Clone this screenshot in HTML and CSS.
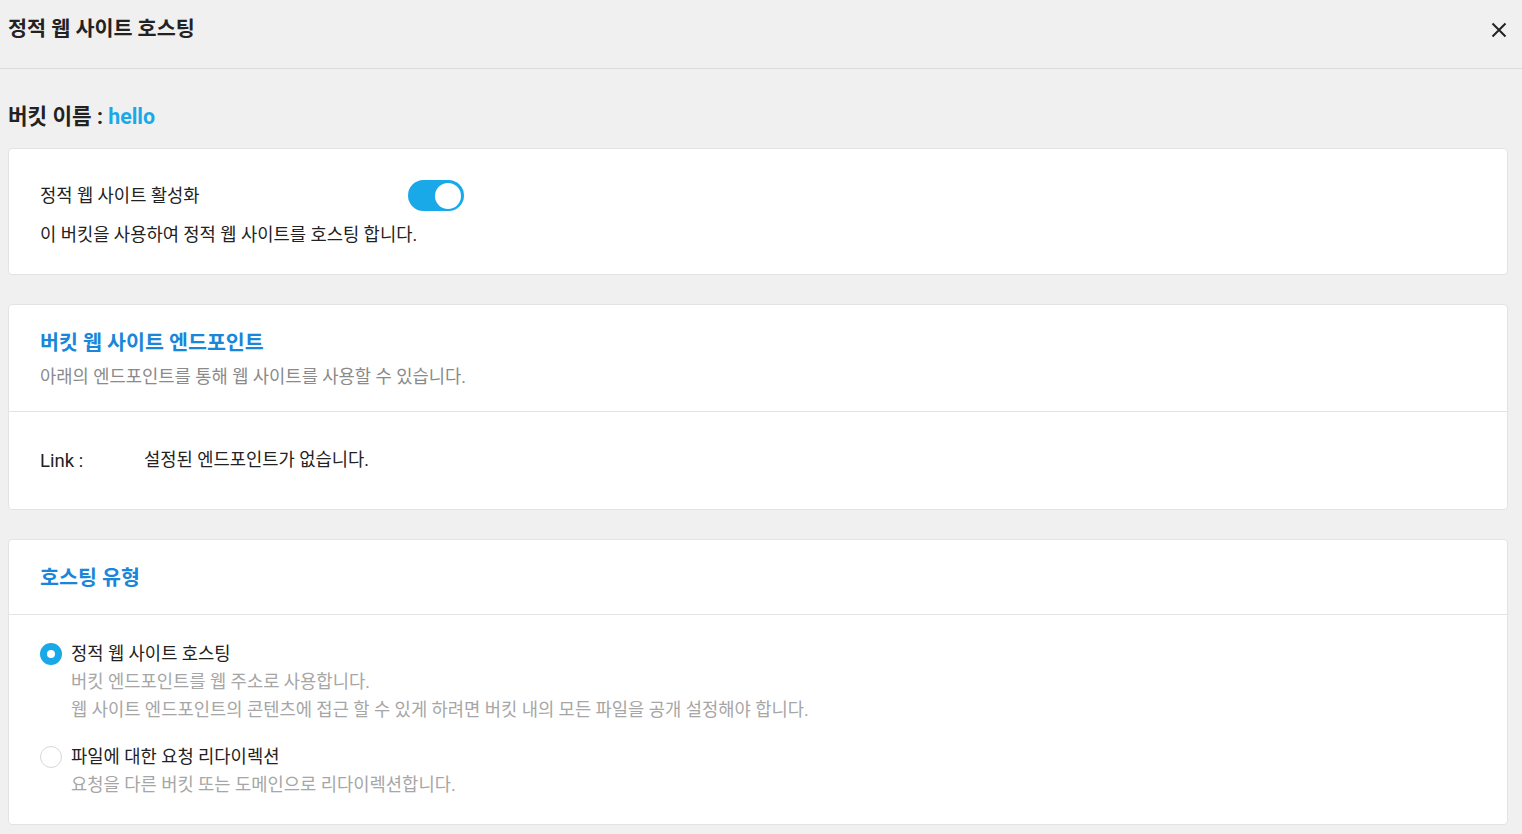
FILE: index.html
```html
<!DOCTYPE html>
<html lang="ko">
<head>
<meta charset="utf-8">
<link rel="stylesheet" href="styles.css">
</head>
<body>
<div class="page">
  <header class="header">
    <h1 class="title">정적 웹 사이트 호스팅</h1>
    <button class="close" aria-label="닫기">
      <svg width="16" height="16" viewBox="0 0 16 16"><path d="M1.5 1.5L14.5 14.5M14.5 1.5L1.5 14.5" stroke="#222" stroke-width="2" fill="none"/></svg>
    </button>
  </header>
  <main class="content">
    <h2 class="bucket">버킷 이름 : <span class="bucket-name">hello</span></h2>

    <section class="card card-toggle">
      <div class="toggle-row">
        <span class="toggle-label">정적 웹 사이트 활성화</span>
        <span class="toggle on"><span class="knob"></span></span>
      </div>
      <p class="toggle-desc">이 버킷을 사용하여 정적 웹 사이트를 호스팅 합니다.</p>
    </section>

    <section class="card">
      <div class="card-head">
        <h3 class="card-title">버킷 웹 사이트 엔드포인트</h3>
        <p class="card-sub">아래의 엔드포인트를 통해 웹 사이트를 사용할 수 있습니다.</p>
      </div>
      <div class="card-body link-body">
        <span class="link-label">Link :</span>
        <span class="link-value">설정된 엔드포인트가 없습니다.</span>
      </div>
    </section>

    <section class="card">
      <div class="card-head card-head-short">
        <h3 class="card-title">호스팅 유형</h3>
      </div>
      <div class="card-body radio-body">
        <div class="radio-item">
          <span class="radio checked"></span>
          <div class="radio-text">
            <div class="radio-label">정적 웹 사이트 호스팅</div>
            <div class="radio-desc">버킷 엔드포인트를 웹 주소로 사용합니다.</div>
            <div class="radio-desc">웹 사이트 엔드포인트의 콘텐츠에 접근 할 수 있게 하려면 버킷 내의 모든 파일을 공개 설정해야 합니다.</div>
          </div>
        </div>
        <div class="radio-item">
          <span class="radio"></span>
          <div class="radio-text">
            <div class="radio-label">파일에 대한 요청 리다이렉션</div>
            <div class="radio-desc">요청을 다른 버킷 또는 도메인으로 리다이렉션합니다.</div>
          </div>
        </div>
      </div>
    </section>
  </main>
</div>
</body>
</html>
```
FILE: styles.css
```css
* { box-sizing: border-box; }
html, body { margin: 0; padding: 0; }
body {
  background: #f0f0f0;
  font-family: Roboto, "Noto Sans CJK KR", sans-serif;
  color: #222;
  width: 1522px;
  height: 834px;
  overflow: hidden;
}
.header {
  height: 69px;
  border-bottom: 1px solid #dcdcdc;
  display: flex;
  align-items: center;
  justify-content: space-between;
  padding: 0 15px 10px 8px;
}
.title {
  margin: 0;
  font-size: 20.7px;
  font-weight: 700;
  color: #222;
  line-height: 28px;
}
.close {
  border: 0;
  background: none;
  padding: 0;
  width: 16px;
  height: 16px;
  margin-top: 2px;
  display: flex;
}
.content {
  padding: 0 14px 0 8px;
}
.bucket {
  margin: 0;
  height: 79px;
  padding-top: 34px;
  font-size: 21.3px;
  font-weight: 700;
  color: #222;
  line-height: 28px;
}
.bucket-name { color: #1aa9e8; }
.card {
  background: #fff;
  border: 1px solid #e3e3e3;
  border-radius: 4px;
  margin-bottom: 29px;
}
.card-toggle {
  height: 127px;
  padding: 30px 31px 0;
}
.toggle-row {
  display: flex;
  align-items: center;
  gap: 208px;
  height: 33px;
}
.toggle-label { font-size: 17.7px; line-height: 24px; }
.toggle {
  width: 56px;
  height: 31px;
  border-radius: 16px;
  background: #1aa9e8;
  position: relative;
  display: inline-block;
}
.toggle .knob {
  position: absolute;
  right: 3px;
  top: 2.5px;
  width: 26px;
  height: 26px;
  border-radius: 50%;
  background: #fff;
}
.toggle-desc {
  margin: 10px 0 0;
  font-size: 17.7px;
  line-height: 26px;
}
.card-head {
  padding: 24px 31px 0;
  height: 107px;
  border-bottom: 1px solid #e3e3e3;
}
.card-head-short { height: 75px; padding-top: 24px; }
.card-title {
  margin: 0;
  font-size: 20.6px;
  font-weight: 700;
  color: #1a86d9;
  line-height: 28px;
}
.card-sub {
  margin: 7px 0 0;
  font-size: 17.7px;
  line-height: 26px;
  color: #8a8a8a;
}
.link-body {
  height: 97px;
  display: flex;
  align-items: center;
  padding: 0 31px;
  font-size: 17.7px;
}
.link-label {
  width: 104px;
  font-size: 18.5px;
  margin-top: 0;
}
.link-value { margin-bottom: 6px; }
.radio-body {
  padding: 26px 31px 25px;
}
.radio-item {
  display: flex;
  gap: 9px;
  margin-bottom: 20px;
}
.radio-item:last-child { margin-bottom: 0; }
.radio {
  width: 22px;
  height: 22px;
  border-radius: 50%;
  border: 1px solid #d8d8d8;
  background: #fff;
  margin-top: 2px;
  flex: none;
}
.radio.checked {
  border: 7px solid #1aa9e8;
}
.radio-label {
  font-size: 17.7px;
  line-height: 26px;
  color: #222;
  margin-bottom: 1px;
}
.radio-desc {
  font-size: 17.7px;
  line-height: 28px;
  color: #a6a6a6;
}
```
